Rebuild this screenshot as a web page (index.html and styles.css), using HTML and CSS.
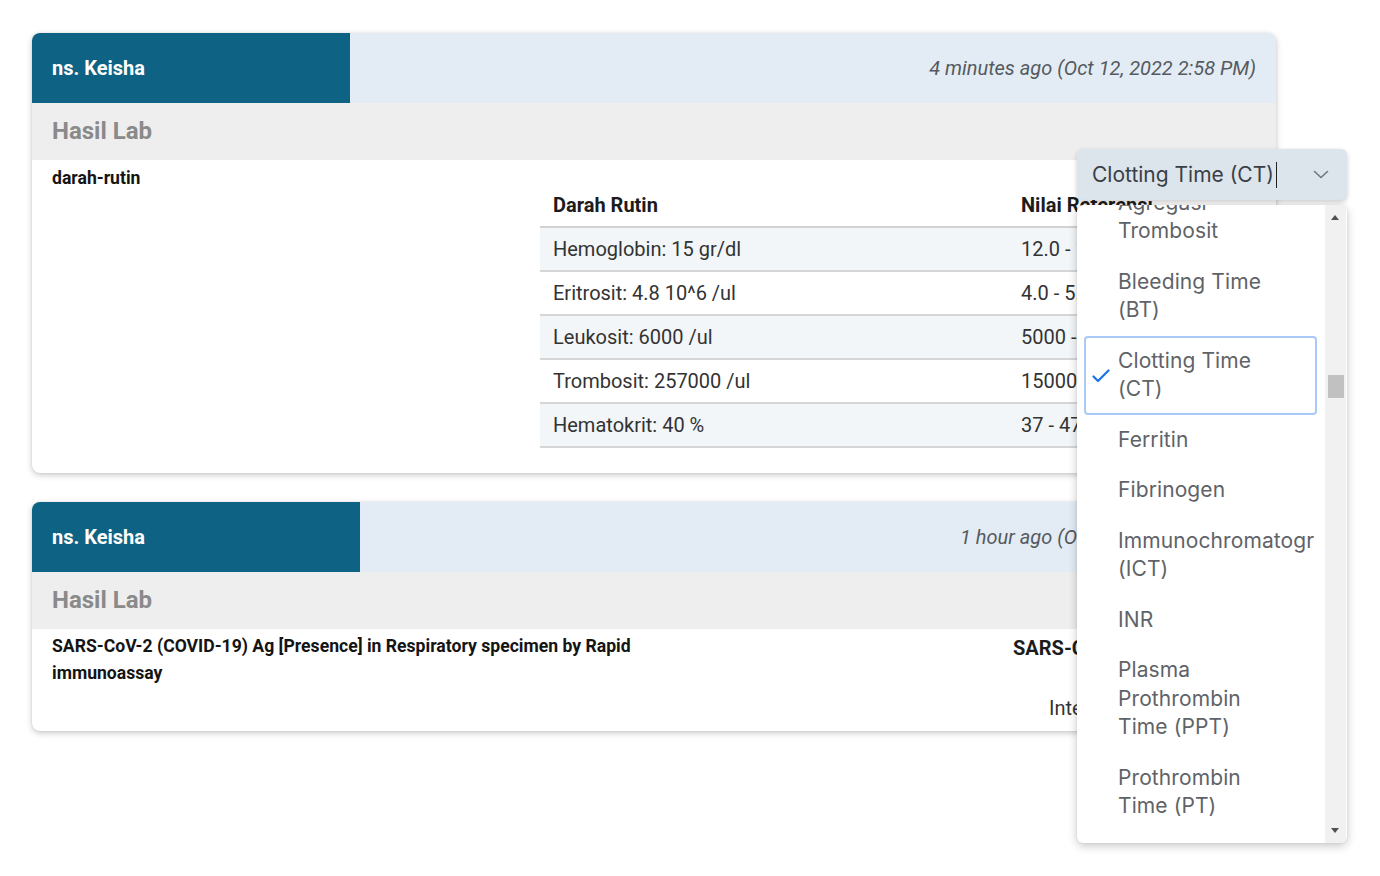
FILE: index.html
```html
<!DOCTYPE html>
<html lang="id">
<head>
<meta charset="utf-8">
<title>Hasil Lab</title>
<link rel="stylesheet" href="styles.css">
</head>
<body>
<main class="page">
  <section class="card">
    <header class="card-head">
      <div class="author author-a">ns. Keisha</div>
      <div class="time">4 minutes ago (Oct 12, 2022 2:58 PM)</div>
    </header>
    <div class="section-title">Hasil Lab</div>
    <div class="card-body">
      <div class="col-left col-left-a">darah-rutin</div>
      <div class="col-table">
        <table class="lab-table">
          <thead>
            <tr><th class="c1">Darah Rutin</th><th>Nilai Referensi</th></tr>
          </thead>
          <tbody>
            <tr><td>Hemoglobin: 15 gr/dl</td><td>12.0 - 16.0 gr/dl</td></tr>
            <tr><td>Eritrosit: 4.8 10^6 /ul</td><td>4.0 - 5.5 10^6 /ul</td></tr>
            <tr><td>Leukosit: 6000 /ul</td><td>5000 - 10000 /ul</td></tr>
            <tr><td>Trombosit: 257000 /ul</td><td>150000 - 400000 /ul</td></tr>
            <tr><td>Hematokrit: 40 %</td><td>37 - 47 %</td></tr>
          </tbody>
        </table>
      </div>
    </div>
  </section>

  <section class="card">
    <header class="card-head">
      <div class="author author-b">ns. Keisha</div>
      <div class="time">1 hour ago (Oct 12, 2022 1:54 PM)</div>
    </header>
    <div class="section-title">Hasil Lab</div>
    <div class="card-body card-body-b">
      <div class="col-left col-left-b">SARS-CoV-2 (COVID-19) Ag [Presence] in Respiratory specimen by Rapid immunoassay</div>
      <div class="covid-result">
        <div class="covid-title">SARS-CoV-2 Ag</div>
        <div class="covid-sub">Interpretasi</div>
      </div>
    </div>
  </section>
</main>

<div class="dropdown">
  <div class="select">
    <span class="select-text">Clotting Time (CT)</span><span class="caret"></span>
    <svg class="chevron" width="16" height="9" viewBox="0 0 16 9"><polyline points="1.5,1.5 8,7.5 14.5,1.5" fill="none" stroke="#6f7680" stroke-width="1.6" stroke-linecap="round" stroke-linejoin="round"/></svg>
  </div>
  <div class="list">
    <ul class="options">
      <li class="option">Agregasi Trombosit</li>
      <li class="option">Bleeding Time (BT)</li>
      <li class="option selected">
        <svg class="check" width="18" height="14" viewBox="0 0 18 14"><polyline points="1.5,7.5 6,12 16.5,1.5" fill="none" stroke="#1a73e8" stroke-width="2.2" stroke-linecap="round" stroke-linejoin="round"/></svg>
        Clotting Time (CT)
      </li>
      <li class="option">Ferritin</li>
      <li class="option">Fibrinogen</li>
      <li class="option">Immunochromatography (ICT)</li>
      <li class="option">INR</li>
      <li class="option">Plasma Prothrombin Time (PPT)</li>
      <li class="option">Prothrombin Time (PT)</li>
      <li class="option">Trombosit</li>
    </ul>
    <div class="scrollbar">
      <span class="arrow-up"></span>
      <span class="thumb"></span>
      <span class="arrow-down"></span>
    </div>
  </div>
</div>
</body>
</html>
```

FILE: styles.css
```css
* { box-sizing: border-box; }

html, body {
  margin: 0;
  padding: 0;
  background: #ffffff;
}

body {
  font-family: Roboto, "Liberation Sans", Arial, sans-serif;
  color: #212121;
  width: 1380px;
  height: 876px;
  overflow: hidden;
  position: relative;
}

.page {
  padding: 33px 0 0 32px;
  display: flex;
  flex-direction: column;
  gap: 29px;
}

.card {
  width: 1244px;
  background: #ffffff;
  border-radius: 8px;
  overflow: hidden;
  box-shadow: 0 2px 6px rgba(0, 0, 0, 0.22), 0 0 2px rgba(0, 0, 0, 0.08);
}

.card-head {
  display: flex;
  height: 70px;
}

.author {
  background: #0e6384;
  color: #ffffff;
  font-weight: 700;
  font-size: 20px;
  display: flex;
  align-items: center;
  padding-left: 20px;
}

.author-a { width: 318px; }
.author-b { width: 328px; }

.time {
  flex: 1;
  background: #e3ecf4;
  display: flex;
  align-items: center;
  justify-content: flex-end;
  padding-right: 20px;
  font-style: italic;
  font-size: 20px;
  color: #555a60;
}

.section-title {
  height: 57px;
  background: #eeeeee;
  display: flex;
  align-items: center;
  padding-left: 20px;
  padding-bottom: 2px;
  font-size: 24px;
  font-weight: 700;
  color: #8a8a8a;
}

.card-body {
  display: flex;
  padding: 5px 20px 25px 20px;
}

.card-body-b {
  padding: 4px 20px 9px 20px;
}

.col-left {
  font-weight: 700;
  font-size: 17.6px;
  line-height: 27px;
  color: #141414;
}

.col-left-a { width: 488px; }
.col-left-b { width: 620px; }

.col-table {
  flex: 1;
  padding-top: 18px;
}

.lab-table {
  width: 100%;
  border-collapse: collapse;
  font-size: 20px;
  color: #333333;
}

.lab-table th {
  text-align: left;
  font-weight: 700;
  color: #1c1c1c;
  height: 44px;
  padding: 0 13px;
  border-bottom: 2px solid #d2d2d2;
}

.lab-table th.c1 { width: 468px; }

.lab-table td {
  height: 44px;
  padding: 0 13px 1px 13px;
  border-bottom: 2px solid #d6d6d6;
  white-space: nowrap;
}

.lab-table tbody tr:nth-child(odd) td {
  background: #f2f6f9;
}

.covid-result {
  margin-left: 328px;
  display: flex;
  flex-direction: column;
}

.covid-title {
  padding-left: 13px;
  font-size: 20px;
  font-weight: 700;
  line-height: 27px;
  margin-top: 2px;
  color: #1c1c1c;
  white-space: nowrap;
}

.covid-sub {
  padding-left: 49px;
  font-size: 20px;
  line-height: 27px;
  margin-top: 33px;
  color: #333333;
  white-space: nowrap;
}

/* dropdown overlay */
.dropdown {
  position: absolute;
  left: 1077px;
  top: 149px;
  width: 270px;
  font-family: Inter, "Noto Sans", sans-serif;
}

.select {
  height: 51px;
  background: #dce4ec;
  border-radius: 6px;
  box-shadow: 0 2px 5px rgba(0, 0, 0, 0.2);
  display: flex;
  align-items: center;
  padding: 0 18px 0 15px;
  font-size: 21px;
  color: #3a3f46;
}

.caret {
  display: inline-block;
  width: 1px;
  height: 26px;
  background: #222;
  margin-left: 2px;
}

.chevron {
  margin-left: auto;
}

.list {
  position: absolute;
  top: 56px;
  left: 0;
  width: 270px;
  height: 638px;
  background: #ffffff;
  border-radius: 6px;
  overflow: hidden;
  box-shadow: 0 3px 10px rgba(0, 0, 0, 0.22), 0 0 2px rgba(0, 0, 0, 0.1);
}

.options {
  list-style: none;
  margin: -27.5px 0 0 0;
  padding: 0 30px 0 7px;
}

.option {
  position: relative;
  padding: 9px 40px 9px 32px;
  border: 2px solid transparent;
  border-radius: 4px;
  font-size: 21px;
  line-height: 28.5px;
  letter-spacing: 0.1px;
  color: #5f6368;
  overflow: hidden;
}

.option.selected {
  border-color: #a9c9f7;
}

.check {
  position: absolute;
  left: 6px;
  top: 31px;
}

.scrollbar {
  position: absolute;
  top: 0;
  right: 1px;
  bottom: 0;
  width: 21px;
  background: #f1f1f1;
}

.arrow-up {
  position: absolute;
  top: 10px;
  left: 6px;
  width: 0;
  height: 0;
  border-left: 4.5px solid transparent;
  border-right: 4.5px solid transparent;
  border-bottom: 5px solid #505050;
}

.arrow-down {
  position: absolute;
  bottom: 10px;
  left: 6px;
  width: 0;
  height: 0;
  border-left: 4.5px solid transparent;
  border-right: 4.5px solid transparent;
  border-top: 5px solid #505050;
}

.thumb {
  position: absolute;
  top: 170px;
  left: 3px;
  width: 16px;
  height: 23px;
  background: #c1c1c1;
}
```
